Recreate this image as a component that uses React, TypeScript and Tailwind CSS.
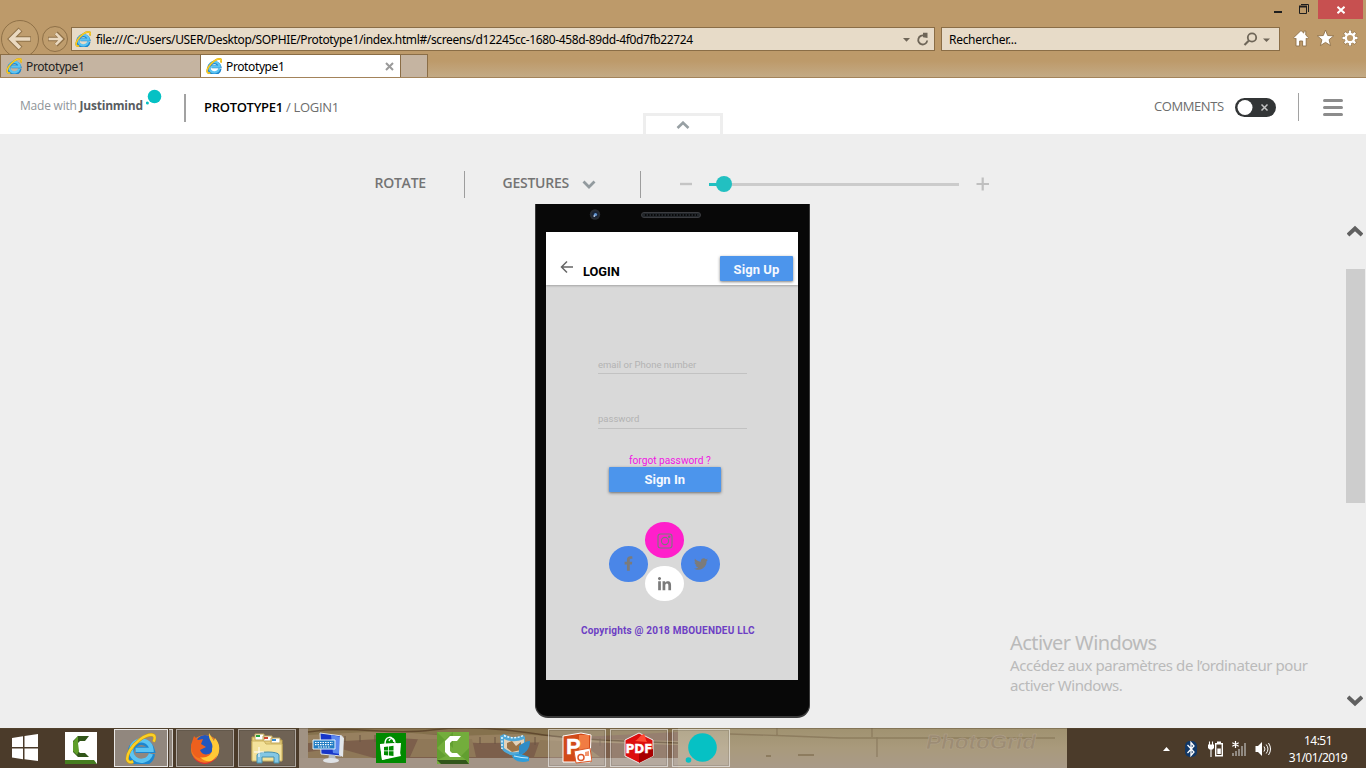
import type { ReactNode } from "react";
import { FaFacebookF, FaLinkedinIn, FaTwitter } from "react-icons/fa";

const SEGOE = "font-['Noto_Sans','Open_Sans',sans-serif]";
const OPEN = "font-['Open_Sans',sans-serif]";
const ROBOTO = "font-['Roboto',sans-serif]";

function IeLogo({ className }: { className: string }) {
  return (
    <svg viewBox="0 0 32 32" className={className}>
      <path d="M27.800 21.500A11 11 0 1 1 27.500 17.500H11" fill="none" stroke="#1c86cf" strokeWidth="6.400" />
      <path d="M26.800 21.500A10.500 10.500 0 1 1 27.300 17.300H11" fill="none" stroke="#5cc4f2" strokeWidth="4.400" />
      <path
        d="M8.500 29.500C1.500 32 .5 26 5 18C11 8.500 21 1.800 27 1.800C31 1.800 31.500 5 29.500 9"
        fill="none"
        stroke="#c99a12"
        strokeWidth="3.400"
      />
      <path
        d="M8.500 29.500C1.500 32 .5 26 5 18C11 8.500 21 1.800 27 1.800C31 1.800 31.500 5 29.500 9"
        fill="none"
        stroke="#fbd027"
        strokeWidth="2.400"
      />
    </svg>
  );
}

function WindowButtons() {
  return (
    <div className="flex h-[19px] justify-end">
      <svg viewBox="0 0 54 19" className="h-[19px] w-[54px]">
        <path d="M10 12h8" stroke="#1e1e1e" strokeWidth="2" />
        <path d="M35.500 6.500h7v7h-7zM37 4.500h7.500V12" fill="none" stroke="#1e1e1e" />
        <path d="M35 6.500h8" stroke="#1e1e1e" strokeWidth="2" />
      </svg>
      <div className="mr-[3px] flex w-[45px] items-center justify-center bg-[#c75050]">
        <svg viewBox="0 0 8 8" className="h-2 w-2">
          <path d="M.5 .8l7 6.400M7.500 .8L.5 7.200" stroke="#fff" strokeWidth="1.900" />
        </svg>
      </div>
    </div>
  );
}

function NavButtons() {
  return (
    <svg viewBox="0 0 71 35" className="h-[35px] w-[71px]">
      <g fill="#bf9d6d" stroke="#8f7148">
        <circle cx="20" cy="20" r="18.500" />
        <circle cx="55" cy="20" r="12.500" />
      </g>
      <g fill="none" strokeLinejoin="miter">
        <path d="M31 20H12M20.500 10.500L11 20l9.500 9.500" stroke="#8f7148" strokeWidth="5.600" />
        <path d="M30.300 20H12M20 11l-9 9 9 9" stroke="#ead9c0" strokeWidth="3.600" />
        <path d="M48 20h13M56 14l6 6-6 6" stroke="#8f7148" strokeWidth="4.400" />
        <path d="M48.600 20H61M55.700 14.300l5.700 5.700-5.700 5.700" stroke="#ead9c0" strokeWidth="2.600" />
      </g>
    </svg>
  );
}

function AddressRow() {
  return (
    <div className="flex h-[35px]">
      <NavButtons />
      <div className="mt-2 flex h-6 w-[864px] items-center border border-[#8a6d46] bg-[#e7dbc8]">
        <IeLogo className="ml-[3px] h-4 w-4" />
        <span className={`ml-[5px] mt-0.5 w-[799px] whitespace-nowrap text-[12px] leading-4 tracking-[-0.365px] text-black ${SEGOE}`}>
          file:///C:/Users/USER/Desktop/SOPHIE/Prototype1/index.html#/screens/d12245cc-1680-458d-89dd-4f0d7fb22724
        </span>
        <svg viewBox="0 0 34 22" className="h-[22px] w-[34px]">
          <path d="M8 10h7l-3.500 3.800z" fill="#6f6658" />
          <path d="M32.200 12.500a4.500 4.500 0 1 1-2.800-4.700" fill="none" stroke="#6f6658" strokeWidth="1.800" />
          <path d="M28 4.800l4.500 0v5.200l-4.500-.7z" fill="#6f6658" />
        </svg>
      </div>
      <div className="ml-1.5 mt-2 flex h-6 w-[339px] items-center justify-between border border-[#8a6d46] bg-[#e7dbc8]">
        <span className={`ml-[7px] mt-0.5 text-[12px] leading-4 tracking-[-0.300px] text-black ${SEGOE}`}>Rechercher...</span>
        <svg viewBox="0 0 38 22" className="h-[22px] w-[38px]">
          <circle cx="11" cy="9.500" r="4.200" fill="none" stroke="#6f6658" strokeWidth="1.800" />
          <path d="M8 12.500L3.500 17" stroke="#6f6658" strokeWidth="2.200" />
          <path d="M22 10.500h7L25.500 14z" fill="#6f6658" />
        </svg>
      </div>
      <svg viewBox="0 0 86 35" className="h-[35px] w-[86px]">
        <g fill="#fff" stroke="#8f7148" strokeWidth=".9">
          <path d="M21 11.500l2.800 2.600v-2h2v4l2.700 2.600-1.300 1.400-1-.9V27h-3.600v-5h-3v5H16v-7.800l-1 .9-1.400-1.400z" />
          <path d="M45.500 11l2.200 5.500 6 .4-4.600 3.800 1.500 5.900-5.100-3.200-5.100 3.200 1.500-5.900-4.600-3.800 6-.4z" />
        </g>
        <g transform="translate(70 19)">
          <path d="M0-8V8M-8 0H8M-5.500-5.500l11 11M5.500-5.500l-11 11" stroke="#8f7148" strokeWidth="3.600" />
          <path d="M0-7.500V7.500M-7.500 0H7.500M-5.200-5.200L5.200 5.200M5.200-5.200L-5.200 5.200" stroke="#fff" strokeWidth="2.400" />
          <circle r="4.200" fill="#bd9a6a" stroke="#fff" strokeWidth="2.200" />
        </g>
      </svg>
    </div>
  );
}

function Tabs() {
  return (
    <div className="flex h-6 border-b border-[#a3835a] bg-linear-to-b from-[#bd9a6a] from-30% to-[#c3aa85]">
      <div className="flex w-[200px] items-center border-l border-t border-[#8a6d46] bg-[#c5b4a1]">
        <IeLogo className="ml-[5px] h-4 w-4" />
        <span className={`ml-1 mt-0.5 text-[12px] leading-4 tracking-[-0.380px] text-[#222] ${SEGOE}`}>Prototype1</span>
      </div>
      <div className="flex w-[201px] items-center border-x border-t border-[#8a6d46] bg-white">
        <IeLogo className="ml-[5px] h-4 w-4" />
        <span className={`ml-1 mt-0.5 text-[12px] leading-4 tracking-[-0.380px] text-black ${SEGOE}`}>Prototype1</span>
        <svg viewBox="0 0 9 9" className="ml-auto mr-1.5 h-[9px] w-[9px]">
          <path d="M1 1l7 7M8 1L1 8" stroke="#9a9a9a" strokeWidth="2" />
        </svg>
      </div>
      <div className="w-[27px] border-r border-t border-[#8a6d46] bg-[#c5b4a1]" />
    </div>
  );
}

function AppHeader() {
  return (
    <header className={`flex h-14 items-start bg-white ${OPEN}`}>
      <div className="ml-5 mt-5 w-[126px] whitespace-nowrap text-[12px] leading-4 tracking-[-0.22px] text-[#8f9599]">
        Made with <span className="font-bold text-[#585c5f]">Justinmind</span>
      </div>
      <svg viewBox="0 0 18 18" className="mt-[10px] h-[18px] w-[18px]">
        <circle cx="8.500" cy="8.500" r="6.800" fill="#06c1c4" />
        <circle cx="1.400" cy="15" r="1.500" fill="#06c1c4" />
      </svg>
      <div className="ml-5 mt-4 h-7 w-0.5 bg-[#a2a2a2]" />
      <div className="ml-[18px] mt-[21px] w-[438px] text-[13px] leading-4 tracking-[-0.300px] text-[#6d6d6d]">
        <span className="font-semibold text-black">PROTOTYPE1</span> / <span className="font-medium">LOGIN1</span>
      </div>
      <div className="ml-px mt-[35px] flex h-[21px] w-20 items-center justify-center border-x-[3px] border-t-[3px] border-[#eee] bg-white">
        <svg viewBox="0 0 14 8" className="h-2 w-3.5">
          <path d="M1.500 7L7 1.700 12.500 7" fill="none" stroke="#98a0a4" strokeWidth="2.600" />
        </svg>
      </div>
      <span className="ml-auto mt-5 w-[81px] whitespace-nowrap text-[13px] leading-4 tracking-[-0.42px] text-[#6d6d6d]">COMMENTS</span>
      <svg viewBox="0 0 41 19" className="mt-5 h-[19px] w-[41px]">
        <rect width="41" height="19" rx="9.500" fill="#323536" />
        <circle cx="10" cy="9.500" r="7.500" fill="#fff" />
        <path d="M26.500 6.500l6 6M32.500 6.500l-6 6" stroke="#c4c4c4" strokeWidth="1.500" />
      </svg>
      <div className="ml-[22px] mt-[15px] h-7 w-px bg-[#a2a2a2]" />
      <div className="ml-6 mr-[23px] mt-[21px] flex w-5 flex-col gap-1">
        <div className="h-[3px] rounded-sm bg-[#8c8c8c]" />
        <div className="h-[3px] rounded-sm bg-[#8c8c8c]" />
        <div className="h-[3px] rounded-sm bg-[#8c8c8c]" />
      </div>
    </header>
  );
}

function Toolbar() {
  return (
    <div className={`flex h-[70px] pt-[37px] text-[14px] font-semibold leading-6 tracking-[-0.25px] text-[#747474] ${OPEN}`}>
      <span className="ml-[374.500px] w-[89.500px]">ROTATE</span>
      <div className="h-[27px] w-px bg-[#9d9d9d]" />
      <span className="ml-[37.500px] w-[79.500px]">GESTURES</span>
      <svg viewBox="0 0 14 9" className="mt-[9px] h-[9px] w-3.5">
        <path d="M1.500 1.500L7 7l5.500-5.500" fill="none" stroke="#929a9e" strokeWidth="2.800" />
      </svg>
      <div className="ml-11 h-[27px] w-px bg-[#9d9d9d]" />
      <svg viewBox="0 0 310 26" className="ml-[39px] h-[26px] w-[310px]">
        <path d="M0 13h12" stroke="#c4c4c4" strokeWidth="2.400" />
        <path d="M29 13.500h250" stroke="#cbcbcb" strokeWidth="3" />
        <path d="M29 13.500h15" stroke="#22c0c1" strokeWidth="3" />
        <circle cx="44" cy="13" r="8" fill="#22c0c1" />
        <path d="M296.500 13h12.500M302.700 6.500v13" stroke="#bfbfbf" strokeWidth="2.200" />
      </svg>
    </div>
  );
}

function PhoneTop() {
  return (
    <div className="flex h-7">
      <svg viewBox="0 0 14 14" className="ml-[52px] mt-1 h-3.5 w-3.5">
        <circle cx="7" cy="6.500" r="5.200" fill="#282c32" />
        <circle cx="7" cy="6.500" r="3.200" fill="#192437" />
        <circle cx="7.500" cy="6.500" r="1.600" fill="#6296d2" />
        <circle cx="6.300" cy="8" r="1" fill="#b8c6da" />
      </svg>
      <svg viewBox="0 0 60 6" className="ml-[39px] mt-2 h-1.5 w-[60px]">
        <rect x=".5" y=".5" width="59" height="5" rx="2.500" fill="#22262a" stroke="#3b3c40" />
        <path d="M4 3h52" stroke="#000" strokeWidth="1.500" strokeDasharray="1.500 1.500" />
      </svg>
    </div>
  );
}

function Bubble({ tone, children }: { tone: string; children: ReactNode }) {
  return (
    <div className={`flex h-[35.500px] w-[39px] items-center justify-center rounded-[50%] text-[#7b7b7b] ${tone}`}>{children}</div>
  );
}

function Phone() {
  return (
    <div className={`ml-[535px] h-[514px] w-[275px] rounded-b-[13px] border-x border-b-2 border-[#3a3a3a] bg-[#080808] ${ROBOTO}`}>
      <PhoneTop />
      <div className="ml-[10px] flex h-[448px] w-[252px] flex-col bg-[#d9d9d9]">
        <div className="flex h-[53px] bg-white shadow-[0_1px_2px_rgba(0,0,0,0.25)]">
          <svg viewBox="0 0 14 14" className="ml-[14px] mt-7 h-3.5 w-3.5">
            <path d="M13 7H1.500M7 1.500L1.500 7 7 12.500" fill="none" stroke="#666" strokeWidth="1.500" />
          </svg>
          <span className="ml-[9px] mt-8 w-[137px] text-[12.800px] font-bold leading-4 text-black">LOGIN</span>
          <div className="mt-6 h-[25px] w-[73px] rounded-[1px] bg-[#4c95ec] text-center text-[13px] font-bold leading-[27px] tracking-[0.08px] text-[#f4f8fe] shadow-[0_1px_3px_rgba(0,0,0,0.5)]">
            Sign Up
          </div>
        </div>
        <div className="ml-[52px] mt-[74px] h-[15px] w-[149px] border-b border-[#c2c2c2] text-[9.500px] leading-3 text-[#b3b3b3]">
          email or Phone number
        </div>
        <div className="ml-[52px] mt-[39px] h-4 w-[149px] border-b border-[#c2c2c2] text-[9.500px] leading-3 text-[#b3b3b3]">
          password
        </div>
        <div className="ml-[83px] mt-[25px] h-[13px] text-[10.200px] leading-[14px] text-[#f016e4]">forgot password ?</div>
        <div className="ml-[63px] h-[25px] w-[111.500px] shrink-0 rounded-[1px] bg-[#4c95ec] text-center text-[13px] font-bold leading-[26px] text-[#f4f8fe] shadow-[0_1px_3px_rgba(0,0,0,0.5)]">
          Sign In
        </div>
        <div className="ml-[62.700px] mt-[30px] flex w-[112px] items-start">
          <div className="mt-6">
            <Bubble tone="bg-[#4a86e8]">
              <FaFacebookF className="h-[15px] w-[9px]" />
            </Bubble>
          </div>
          <div className="-ml-[2.700px] flex flex-col gap-2">
            <Bubble tone="bg-[#ff1fcb]">
              <svg viewBox="0 0 16 16" className="mt-0.5 h-4 w-4" fill="none" stroke="#7b7b7b" strokeWidth="1.100">
                <rect x="1" y="1" width="14" height="14" rx="2.500" />
                <circle cx="8" cy="8" r="3.600" />
                <circle cx="12.200" cy="3.800" r=".7" fill="#7b7b7b" />
              </svg>
            </Bubble>
            <Bubble tone="bg-white">
              <FaLinkedinIn className="mt-0.5 h-[15px] w-[15px]" />
            </Bubble>
          </div>
          <div className="-ml-[2.700px] mt-6">
            <Bubble tone="bg-[#4a86e8]">
              <FaTwitter className="h-[14px] w-[14px]" />
            </Bubble>
          </div>
        </div>
        <div className="ml-[35px] mt-6 whitespace-nowrap text-[10px] font-bold leading-3 tracking-[0.19px] text-[#6d3fc4]">
          Copyrights @ 2018 MBOUENDEU LLC
        </div>
      </div>
    </div>
  );
}

function ScrollBar() {
  return (
    <div className="flex w-5 flex-col">
      <svg viewBox="0 0 16 12" className="ml-0.5 mt-[91px] h-3 w-4">
        <path d="M1 10L8 3.500l7 6.500" fill="none" stroke="#606060" strokeWidth="4" />
      </svg>
      <div className="ml-px mt-8 h-[234px] w-[19px] bg-[#cdcdcd]" />
      <svg viewBox="0 0 16 12" className="ml-0.5 mt-48 h-3 w-4">
        <path d="M1 2L8 8.500 15 2" fill="none" stroke="#606060" strokeWidth="4" />
      </svg>
    </div>
  );
}

function TaskbarBackdrop() {
  return (
    <svg viewBox="0 0 1366 40" className="absolute inset-0 h-10 w-[1366px]">
      <defs>
        <linearGradient id="sand" x1="0" y1="0" x2="0" y2="1">
          <stop offset="0" stopColor="#a09270" />
          <stop offset=".5" stopColor="#a99a7c" />
          <stop offset="1" stopColor="#a99a88" />
        </linearGradient>
        <filter id="soft" x="-2%" y="-20%" width="104%" height="140%">
          <feGaussianBlur stdDeviation=".7" />
        </filter>
      </defs>
      <rect width="1366" height="40" fill="#4b3b2a" />
      <rect x="299" width="768" height="40" fill="url(#sand)" />
      <rect x="299" width="9" height="40" fill="#a19384" />
      <rect x="308" width="370" height="30" fill="#7c5f4b" />
      <g filter="url(#soft)">
        <path d="M308 0h370v4L560 10 450 7 380 5 308 9z" fill="#85714d" />
        <path d="M308 7l80-4 60 5 70-2 70 5 90 2v4l-100-3-100 1-80-5-90 5z" fill="#97805f" />
        <path d="M418 11h54l4 18h-66zM308 24l30-4 36 10h-66zM540 12l40 2 20 15h-66z" fill="#8f7858" />
        <path d="M330 8v6M345 8v6M360 7v7M375 7v7M480 9v7M495 9v7M535 9v8M600 10v8M625 11v8M650 12v8" stroke="#695340" />
        <path d="M308 4c50-7 80 4 124-2s88 2 120 6 90 6 126 7" fill="none" stroke="#60492f" strokeWidth="1.500" />
        <path d="M730 6l60 2 50 2h215M777 0v8M872 0v9M877 9v20" fill="none" stroke="#837256" strokeOpacity=".7" strokeWidth="1.300" />
        <path d="M766 28h5M798 27h16" stroke="#8d7b5e" strokeWidth="2" />
      </g>
      <rect y="30" x="299" width="379" height="10" fill="#a39486" />
      <path d="M0 .5h1366" stroke="#5b4a31" strokeOpacity=".4" />
      <text
        x="926"
        y="21"
        fill="#9c8c74"
        stroke="#b2a38c"
        strokeWidth=".5"
        fontFamily="Liberation Sans"
        fontSize="21"
        fontWeight="bold"
        fontStyle="italic"
        textLength="110"
        lengthAdjust="spacingAndGlyphs"
      >
        PhotoGrid
      </text>
    </svg>
  );
}

function Slot({ framed, children }: { framed?: boolean; children: ReactNode }) {
  return (
    <div className="flex w-[62px] items-center justify-center">
      <div
        className={
          framed
            ? "flex h-[38px] w-[58px] items-center justify-center border border-white/45 bg-white/20 outline-1 -outline-offset-2 outline-black/10"
            : "flex h-[38px] w-[58px] items-center justify-center"
        }
      >
        {children}
      </div>
    </div>
  );
}

function Taskbar() {
  return (
    <footer className="relative h-10 w-full">
      <TaskbarBackdrop />
      <div className="relative flex h-10">
        <svg viewBox="0 0 50 40" className="h-10 w-[50px]">
          <path d="M12 10l11-1.700V19H12zM24.500 8L38 6v13H24.500zM12 20.500h11v10.700L12 29.600zM24.500 20.500H38V33l-13.500-1.800z" fill="#fff" />
        </svg>
        <Slot>
          <svg viewBox="0 0 32 32" className="h-8 w-8">
            <path d="M0 0h32v32H0z" fill="#fff" />
            <path d="M0 28h29l3 4H0z" fill="#467c20" />
            <path d="M8 9l5-5h11l-4 5h-5l-2 2v8l2 2h5l4 4H13l-5-5z" fill="#315519" />
            <path d="M8 10l5-6v7l1 8-2 4-4-4z" fill="#5f9e29" />
          </svg>
        </Slot>
        <div className="flex w-[62px] py-px pl-0.5">
          <div className="flex h-[38px] w-[54px] items-center justify-center border border-white/80 bg-[#91877e]">
            <IeLogo className="mr-px h-[31px] w-[31px]" />
          </div>
          <div className="ml-px h-[38px] w-[4px] border-y border-r border-white/60 bg-[#91877e]" />
        </div>
        <Slot framed>
          <svg viewBox="0 0 32 32" className="h-8 w-8">
            <circle cx="16" cy="17" r="14" fill="#f27b20" />
            <circle cx="16" cy="13" r="10" fill="#2257bd" />
            <path d="M2 13L5 4l4 4 5-1-2 5 5 3-6 3c2 6 10 6 13 1 1 8-8 10-14 7C5 25 2 20 2 13z" fill="#ee601d" />
            <path d="M20 1c-1 8 5 9 3 16 1 6-7 10-12 8 7 8 18 4 19-6 1-6-1-9-4-13l-1 3z" fill="#ffc936" />
            <path d="M3 22c5 10 19 13 25 1-3 11-20 13-25-1z" fill="#e62d35" />
          </svg>
        </Slot>
        <Slot framed>
          <svg viewBox="0 0 34 32" className="h-8 w-[34px]">
            <path d="M2 5h10l2 3h18v20H2z" fill="#e6cf80" stroke="#b99d48" />
            <path d="M5 2h9v6H5zM13 4h9v5h-9zM21 6h9v5h-9z" fill="#fff" stroke="#c3a858" />
            <path d="M6 3h4v2H6z" fill="#26a33a" />
            <path d="M14 5h4v2h-4z" fill="#cf4630" />
            <path d="M22 7h4v2h-4z" fill="#3a8bd0" />
            <path d="M2 9h12l2 3h16v17H2z" fill="#f4e29b" stroke="#cbb15e" />
            <path d="M7 31V23c0-4 22-4 22 0v8h-5v-6H12v6z" fill="#84c7e4" stroke="#478fac" />
            <path d="M9 15v10M4 20h10" stroke="#fff" />
          </svg>
        </Slot>
        <Slot>
          <svg viewBox="0 0 34 32" className="h-8 w-[34px]">
            <path d="M8 1l22 3-1 20-20-2z" fill="#1736c9" stroke="#dbe2e7" />
            <path d="M19 3l10 2-1 17-7-1z" fill="#5c88ee" />
            <path d="M28 3l4 3-1 19-4-2z" fill="#e3e6ea" />
            <path d="M17 23h6l1 5H16z" fill="#b7bdc4" />
            <ellipse cx="19" cy="28.500" rx="8" ry="2.500" fill="#dfe2e6" />
            <path d="M1 8h22v9H1z" fill="#237dc4" stroke="#e6f4fd" />
            <path d="M3 10.500h18M3 12.700h18M6 15h12" stroke="#fff" strokeWidth="1.200" strokeDasharray="1.500 1" />
          </svg>
        </Slot>
        <Slot>
          <svg viewBox="0 0 30 30" className="h-[30px] w-[30px]">
            <path d="M0 0h30v30H0z" fill="#008a00" />
            <path d="M4 11l21-1-1 12-18 5z" fill="#fff" />
            <path d="M4 11l17-1 4 13-19 4z" fill="#fff" />
            <path d="M9 11c0-8 8-9 9-2" fill="none" stroke="#fff" strokeWidth="1.500" />
            <path d="M13 8c1-4 6-3 6 2" fill="none" stroke="#fff" strokeWidth="1.200" />
            <path d="M8 14l4-.5v4H8zM12.800 13.400l4.700-.6v4.700h-4.700zM8 18.300h4v4.100l-4-.4zM12.800 18.300h4.700v4.700l-4.700-.5z" fill="#008a00" />
          </svg>
        </Slot>
        <Slot>
          <svg viewBox="0 0 32 32" className="h-8 w-8">
            <path d="M0 0h32v32H0z" fill="#73ad3c" />
            <path d="M0 0l8 8-8 8zM16 0l-8 8 8 8zM32 16l-8 8 8 6zM0 28V16l9 8z" fill="#549426" opacity=".55" />
            <path d="M0 28h29l3 4H4z" fill="#31551a" />
            <path d="M8 9l5-5h11l-4 5h-5l-2 2v8l2 2h5l4 4H13l-5-5z" fill="#fff" />
          </svg>
        </Slot>
        <Slot>
          <svg viewBox="0 0 32 32" className="h-8 w-8">
            <path d="M1 4l4-2c7 4 13 4 19 1l2 2v15l-5 4C12 25 4 20 2 16z" fill="#4fa8d8" />
            <path d="M5 7c6 3 13 3 20 0v10c-7 5-14 4-20-1z" fill="#e2d3ba" />
            <path d="M8 11l5-2 4 5 5-4v8l-9 2-5-4z" fill="#9a7448" />
            <path d="M20 14c3-3 8-5 11-5 0 8-5 13-11 14z" fill="#2f8cc6" />
            <path d="M13 24c6-4 12-1 17 1v4c-7 2-14 1-17-5z" fill="#2e9edc" />
            <path d="M15 24c4 1 9 2 14 2" fill="none" stroke="#bfe8fb" strokeWidth="1.200" />
            <path d="M3 5v12M5 3.500c7 3 13 3 19 0" fill="none" stroke="#e6f7ff" strokeWidth="1.500" strokeDasharray="2 1.500" />
          </svg>
        </Slot>
        <Slot framed>
          <svg viewBox="0 0 30 32" className="h-8 w-[30px]">
            <path d="M1 4l18-3 10 2-1 27H1z" fill="#d14a18" stroke="#fff" />
            <path d="M17 3h10v25H17z" fill="#f17c43" />
            <path d="M12 19l16-3 2 13-16 2z" fill="#fff" stroke="#d95827" />
            <circle cx="19" cy="25.500" r="3" fill="none" stroke="#df592a" strokeWidth="1.500" />
            <path d="M23 20l4-1v5h-4z" fill="#f39870" />
            <text x="4" y="22" fill="#fff" stroke="#fff" strokeWidth=".4" fontFamily="Liberation Sans" fontSize="22" fontWeight="bold">
              P
            </text>
          </svg>
        </Slot>
        <Slot framed>
          <svg viewBox="0 0 32 32" className="h-8 w-8">
            <path d="M16 1l14 7v16l-14 7L2 24V8z" fill="#dd0e0e" stroke="#eee" />
            <path d="M16 21l14-4v7l-14 7z" fill="#a90000" />
            <path d="M12 9c3-1 4-5 9-7 2 3 1 5 3 8z" fill="#ff4a34" />
            <text
              x="2.500"
              y="21"
              fill="#fff"
              stroke="#fff"
              strokeWidth=".4"
              fontFamily="DejaVu Sans"
              fontSize="13"
              fontWeight="bold"
              textLength="27"
              lengthAdjust="spacingAndGlyphs"
            >
              PDF
            </text>
          </svg>
        </Slot>
        <Slot framed>
          <svg viewBox="0 0 34 34" className="h-[34px] w-[34px]">
            <circle cx="18.500" cy="16.500" r="14.300" fill="#06c1c4" />
            <circle cx="4.500" cy="29" r="2.800" fill="#06c1c4" />
          </svg>
        </Slot>
        <svg viewBox="0 0 122 40" className="ml-[430px] h-10 w-[122px]" fill="#fff">
          <path d="M1 23l3.500-4 3.500 4z" />
          <rect x="23" y="13" width="12" height="16" rx="5" fill="#113867" />
          <path d="M25.500 17l6.500 7-3 3.500v-13l3 3.500-6.500 7" fill="none" stroke="#fff" strokeWidth="1.300" />
          <path d="M47.500 13.500v4M50.500 13.500v4M49 20v9" stroke="#fff" strokeWidth="1.100" />
          <path d="M46 16.500h6v3.500l-1.500 1.500h-3L46 20z" />
          <path d="M53.700 15.700h6.600v12.100h-6.600z" fill="none" stroke="#fff" strokeWidth="1.400" />
          <path d="M55 13.500h4V15h-4zM55.300 20.500h3.500v5.500h-3.500z" />
          <path d="M70 25h2v3h-2zM73 23h2v5h-2zM76 21h2v7h-2zM79 18h2v10h-2zM82 15h2v13h-2z" fill="#918a82" />
          <path d="M73.500 13v7M70.300 14.800l6.400 3.500M76.700 14.800l-6.400 3.500" stroke="#fff" strokeWidth="1.200" />
          <path d="M93.500 18h2.500l4-4v14l-4-4h-2.500z" />
          <path d="M102 18.500q2 2.500 0 5M104.200 16.500q3.500 4.500 0 9M106.500 15q4 6 0 12" fill="none" stroke="#fff" />
        </svg>
        <div className={`mt-1 w-[68px] text-center text-[12px] leading-[17px] tracking-[-0.55px] text-white ${SEGOE}`}>
          <div>14:51</div>
          <div>31/01/2019</div>
        </div>
      </div>
    </footer>
  );
}

export default function App() {
  return (
    <div className="flex h-[768px] w-[1366px] flex-col overflow-hidden bg-[#eee]">
      <div className="h-[78px] bg-[#bd9a6a]">
        <WindowButtons />
        <AddressRow />
        <Tabs />
      </div>
      <AppHeader />
      <main className="relative flex h-[594px] bg-[#eee]">
        <div className="w-[1345px]">
          <Toolbar />
          <Phone />
        </div>
        <ScrollBar />
        <div className={`absolute left-[1010px] top-[496px] w-[320px] whitespace-nowrap text-[#bababa] ${SEGOE}`}>
          <div className="text-[20px] leading-[25px] tracking-[-0.57px]">Activer Windows</div>
          <div className="text-[15px] leading-5 tracking-[-0.420px]">
            Accédez aux paramètres de l’ordinateur pour
            <br />
            activer Windows.
          </div>
        </div>
      </main>
      <Taskbar />
    </div>
  );
}
